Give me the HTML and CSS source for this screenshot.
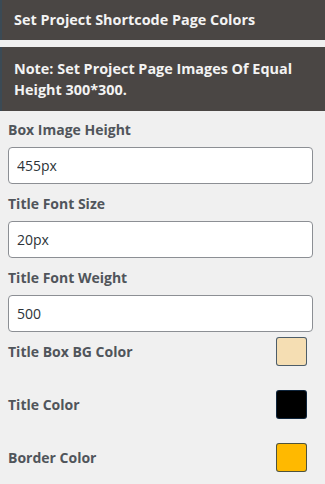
FILE: index.html
```html
<!DOCTYPE html>
<html lang="en">
<head>
  <meta charset="UTF-8" />
  <meta name="viewport" content="width=device-width, initial-scale=1.0"/>
  <title>Project Shortcode Colors</title>

  <link rel="stylesheet" href="styles.css">
</head>
<body>
  <div class="panel">
    <h2 class="panel-title">Set Project Shortcode Page Colors</h2>
    <p class="panel-note">Note: Set Project Page Images Of Equal Height 300*300.</p>

    <form class="settings">
      <div class="field">
        <label for="imgHeight">Box Image Height</label>
        <input type="text" id="imgHeight" value="455px" />
      </div>

      <div class="field">
        <label for="titleSize">Title Font Size</label>
        <input type="text" id="titleSize" value="20px" />
      </div>

      <div class="field">
        <label for="titleWeight">Title Font Weight</label>
        <input type="text" id="titleWeight" value="500" />
      </div>

      <div class="color-row">
        <label>Title Box BG Color</label>
        <span class="swatch swatch-wheat"></span>
      </div>

      <div class="color-row">
        <label>Title Color</label>
        <span class="swatch swatch-black"></span>
      </div>

      <div class="color-row">
        <label>Border Color</label>
        <span class="swatch swatch-amber"></span>
      </div>
    </form>
  </div>
</body>
</html>
```

FILE: styles.css
```css
:root {
  --bar-color: #4a4644;
  --bar-edge: #3b4a55;
  --bar-text: #f3f3f3;
  --page-bg: #f0f0f0;
  --label-color: #50555b;
  --input-border: #8c8f94;
  --font-size: 14px;
}

body {
  margin: 0;
  background-color: var(--page-bg);
  font-family: "Open Sans", "DejaVu Sans", sans-serif;
  font-size: var(--font-size);
  color: var(--label-color);
}

.panel-title,
.panel-note {
  margin: 0;
  background-color: var(--bar-color);
  border-left: 2px solid var(--bar-edge);
  color: var(--bar-text);
  font-size: 14.4px;
  font-weight: 700;
  padding: 0 12px;
}

.panel-title {
  height: 40px;
  line-height: 40px;
  margin-bottom: 7px;
}

.panel-note {
  padding-top: 11px;
  padding-bottom: 11px;
  line-height: 21px;
}

.settings {
  padding: 8px 12px 0 8px;
}

.field label,
.color-row label {
  display: block;
  font-weight: 700;
  line-height: 22px;
}

.field label {
  margin: 0 0 6px;
}

.field + .field {
  margin-top: 9px;
}

.field + .color-row {
  margin-top: 5px;
}

.field input {
  display: block;
  width: 100%;
  height: 37px;
  box-sizing: border-box;
  padding: 0 8px;
  border: 1px solid var(--input-border);
  border-radius: 4px;
  background-color: #fff;
  font-family: inherit;
  font-size: var(--font-size);
  color: #2c3338;
}

.color-row {
  display: flex;
  justify-content: space-between;
  align-items: center;
  height: 29px;
  margin-bottom: 24px;
  padding-right: 6px;
}

.swatch {
  width: 29px;
  height: 27px;
  border: 1px solid rgba(20, 50, 80, 0.75);
  border-radius: 3px;
}

.swatch-wheat {
  background-color: #f5deb3;
}

.swatch-black {
  background-color: #000;
}

.swatch-amber {
  background-color: #ffb900;
}
```
